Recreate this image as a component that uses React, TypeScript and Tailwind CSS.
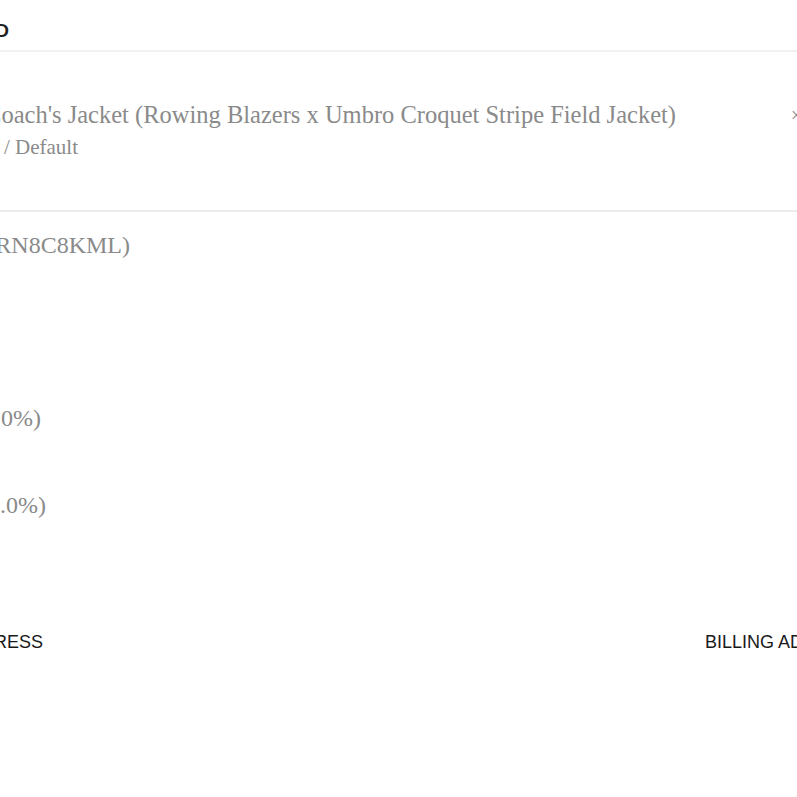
const serif = { fontFamily: '"Liberation Serif", "Times New Roman", serif' };

// The screenshot is cropped on the left, so each line is right-aligned in a
// box that pokes out past the left edge, ending where the reference ends it.
function Clipped({ children, className }: { children: React.ReactNode; className: string }) {
  return <div className={`whitespace-nowrap text-right ${className}`}>{children}</div>;
}

export default function App() {
  return (
    <div className="w-[797px] h-[797px] overflow-hidden bg-white font-['Liberation_Sans',Arial,sans-serif]">
      <div className="flex flex-col">
        <Clipped className="w-[300px] -ml-[291px] pt-[21px] text-[19px] font-semibold text-[#222] leading-[19px]">
          ITEMS ORDERED
        </Clipped>
        <div className="mt-[10px] h-[2px] bg-[#f1f1f1] w-full" />

        <div className="flex items-start justify-between h-[158px] pt-[50px]" style={serif}>
          <div className="flex flex-col">
            <Clipped className="w-[800px] -ml-[124px] text-[24.5px] text-[#8a8a8a] leading-[26px]">
              Coach's Jacket (Rowing Blazers x Umbro Croquet Stripe Field Jacket)
            </Clipped>
            <Clipped className="w-[300px] -ml-[222px] mt-[8px] text-[21px] text-[#8a8a8a] leading-[22px]">
              M / Default
            </Clipped>
          </div>
          <span className="whitespace-nowrap text-[20px] text-[#8a8a8a] leading-[26px] -mr-[20px]">× 1</span>
        </div>
        <div className="h-[2px] bg-[#ececec] w-full" />

        <div style={serif} className="flex flex-col text-[24px] text-[#8a8a8a] leading-[28px]">
          <Clipped className="w-[400px] -ml-[270px] mt-[19px]">Order ID (#RN8C8KML)</Clipped>
          <Clipped className="w-[400px] -ml-[359px] mt-[145px]">Discount (10.0%)</Clipped>
          <Clipped className="w-[400px] -ml-[354px] mt-[59px]">Tax (10.0%)</Clipped>
        </div>

        <div className="flex justify-between mt-[114px] text-[18px] text-[#1a1a1a] leading-[18px]">
          <Clipped className="w-[300px] -ml-[257px]">SHIPPING ADDRESS</Clipped>
          <span className="whitespace-nowrap -mr-[68px]">BILLING ADDRESS</span>
        </div>
      </div>
    </div>
  );
}
